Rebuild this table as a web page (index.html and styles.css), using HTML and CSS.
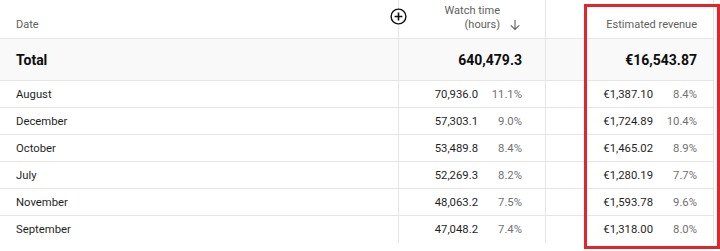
FILE: index.html
```html
<!DOCTYPE html>
<html>
<head>
<meta charset="utf-8">
<link rel="stylesheet" href="styles.css">
</head>
<body>
<div class="wrap">
  <div class="table">
    <div class="row head">
      <div class="cell c1"><span class="hlabel">Date</span></div>
      <div class="cell c2">
        <svg class="plus" width="17" height="17" viewBox="0 0 17 17"><circle cx="8.5" cy="8.5" r="7.4" fill="#fff" stroke="#0f0f0f" stroke-width="1.4"/><path d="M8.5 4.6v7.8M4.6 8.5h7.8" stroke="#0f0f0f" stroke-width="1.6"/></svg>
        <div class="hwatch"><span class="hlabel">Watch time<br>(hours)</span><svg class="arrow" width="12" height="12" viewBox="0 0 12 12"><path d="M6 1v9.5M1.8 6.3L6 10.5l4.2-4.2" fill="none" stroke="#606060" stroke-width="1.1"/></svg></div>
      </div>
      <div class="cell c3"><span class="hlabel">Estimated revenue</span></div>
    </div>
    <div class="row total">
      <div class="cell c1">Total</div>
      <div class="cell c2"><span class="tv">640,479.3</span></div>
      <div class="cell c3"><span class="tv">€16,543.87</span></div>
    </div>
    <div class="row data">
      <div class="cell c1">August</div>
      <div class="cell c2"><span class="num">70,936.0</span><span class="pct">11.1%</span></div>
      <div class="cell c3"><span class="num">€1,387.10</span><span class="pct">8.4%</span></div>
    </div>
    <div class="row data">
      <div class="cell c1">December</div>
      <div class="cell c2"><span class="num">57,303.1</span><span class="pct">9.0%</span></div>
      <div class="cell c3"><span class="num">€1,724.89</span><span class="pct">10.4%</span></div>
    </div>
    <div class="row data">
      <div class="cell c1">October</div>
      <div class="cell c2"><span class="num">53,489.8</span><span class="pct">8.4%</span></div>
      <div class="cell c3"><span class="num">€1,465.02</span><span class="pct">8.9%</span></div>
    </div>
    <div class="row data">
      <div class="cell c1">July</div>
      <div class="cell c2"><span class="num">52,269.3</span><span class="pct">8.2%</span></div>
      <div class="cell c3"><span class="num">€1,280.19</span><span class="pct">7.7%</span></div>
    </div>
    <div class="row data">
      <div class="cell c1">November</div>
      <div class="cell c2"><span class="num">48,063.2</span><span class="pct">7.5%</span></div>
      <div class="cell c3"><span class="num">€1,593.78</span><span class="pct">9.6%</span></div>
    </div>
    <div class="row data last">
      <div class="cell c1">September</div>
      <div class="cell c2"><span class="num">47,048.2</span><span class="pct">7.4%</span></div>
      <div class="cell c3"><span class="num">€1,318.00</span><span class="pct">8.0%</span></div>
    </div>
  </div>
  <div class="highlight"></div>
</div>
</body>
</html>
```
FILE: styles.css
```css
* { box-sizing: border-box; }
html, body { margin: 0; padding: 0; background: #fff; }
body {
  font-family: Roboto, "Liberation Sans", Arial, sans-serif;
  color: #1f1f1f;
  font-size: 11.3px;
}
.wrap { position: relative; width: 720px; height: 251px; }
.table { width: 714px; }
.row {
  display: grid;
  grid-template-columns: 398px 147px 169px;
  border-bottom: 1px solid #e5e5e5;
}
.row.last { border-bottom: none; }
.cell {
  display: flex;
  align-items: center;
  justify-content: flex-end;
  padding-right: 16px;
}
.c1 { justify-content: flex-start; padding-left: 16px; padding-right: 0; }
.c2 { border-left: 1px solid #e5e5e5; padding-right: 23px; position: relative; }
.c3 { border-left: 1px solid #e5e5e5; border-right: 1px solid #e5e5e5; }

.head { height: 39px; }
.head .cell { align-items: flex-end; padding-bottom: 6px; }
.hlabel { color: #606060; font-size: 11px; line-height: 14px; }
.hwatch { display: flex; align-items: flex-end; }
.hwatch .hlabel { text-align: right; }
.arrow { margin-left: 9px; margin-bottom: 1px; margin-right: 1px; }
.plus { position: absolute; left: -9px; top: 8px; }

.total { height: 42px; background: #f9f9f9; }
.total .cell { font-weight: 700; font-size: 14px; color: #0d0d0d; }

.data { height: 27px; }
.num { color: #1f1f1f; }
.pct { width: 44px; text-align: right; color: #717171; }

.highlight {
  position: absolute;
  left: 584px;
  top: 4px;
  width: 136px;
  height: 245px;
  border: 3px solid #e3242b;
}
```
